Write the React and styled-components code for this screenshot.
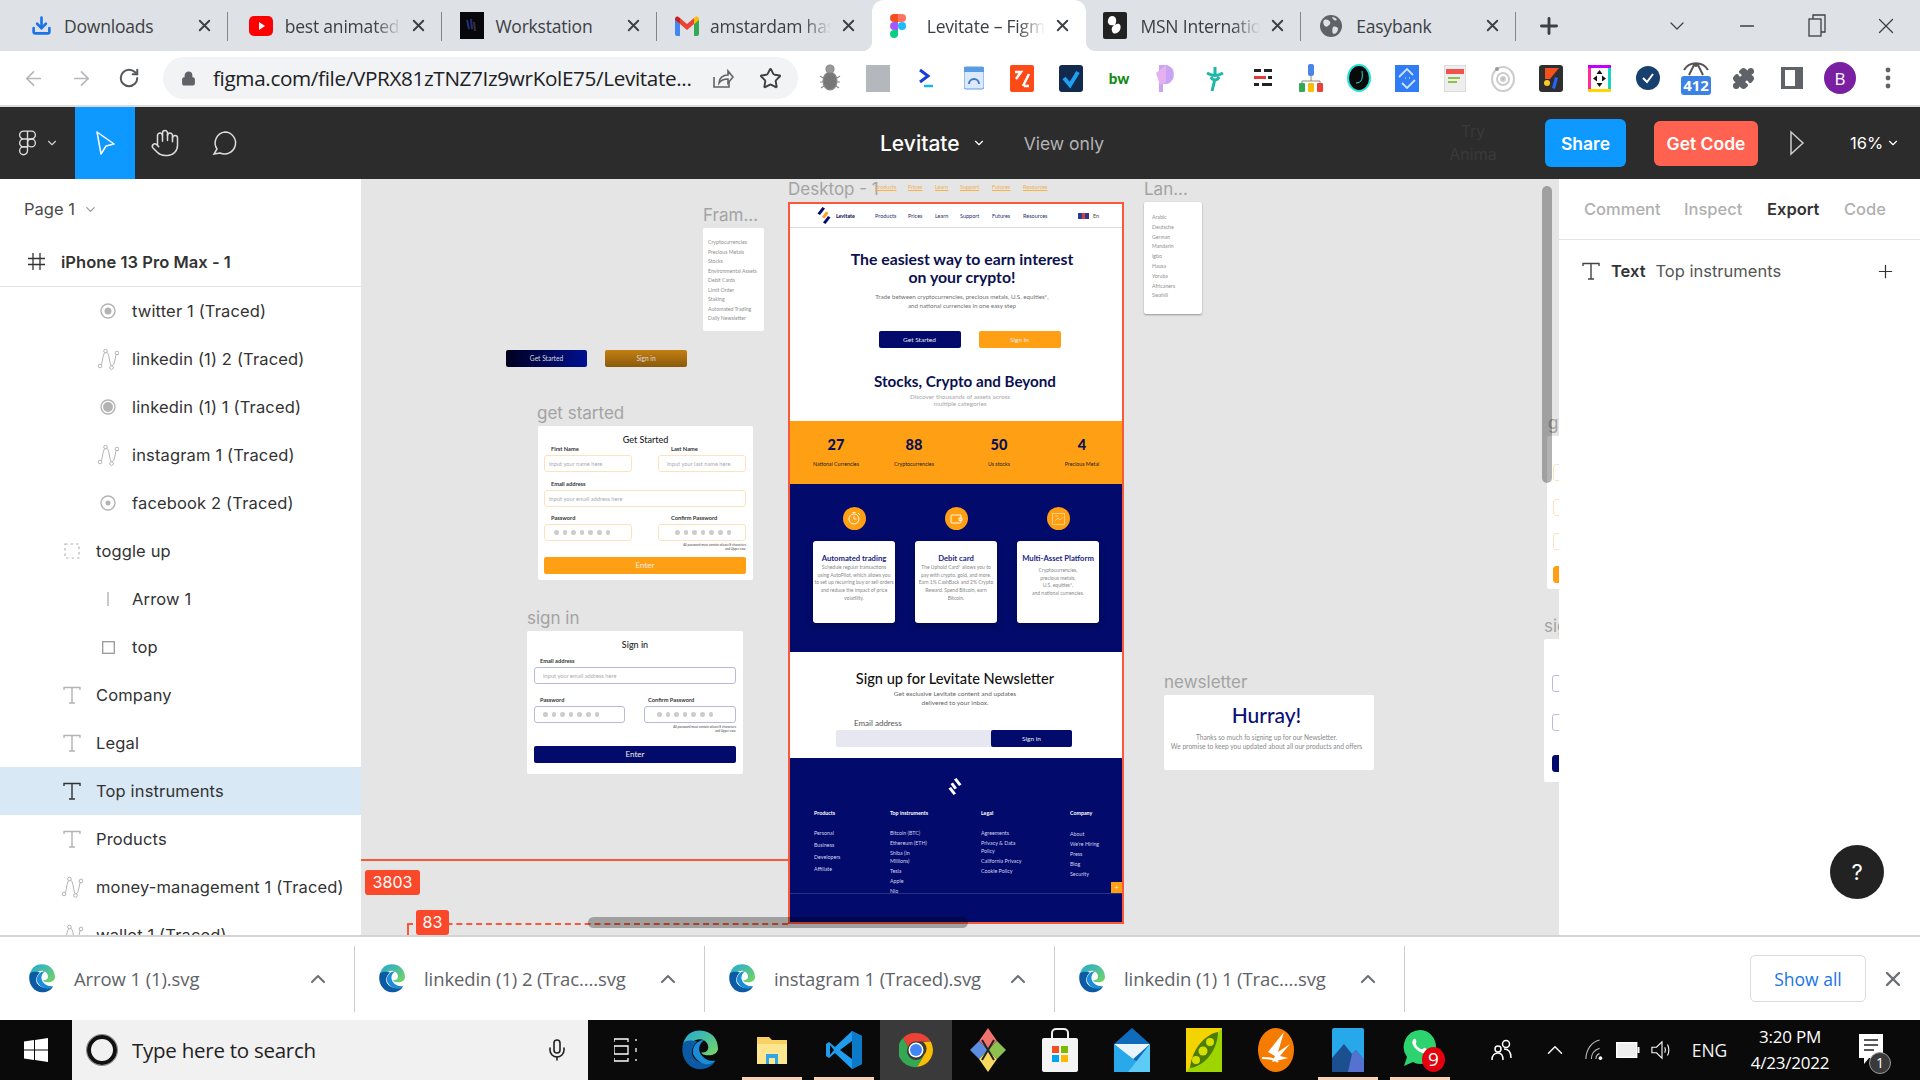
import React from 'react'
import styled, { createGlobalStyle } from 'styled-components'
import {
  ArrowLeft,
  ArrowRight,
  RotateCw,
  Lock,
  Star,
  Plus,
  ChevronDown,
  ChevronUp,
  X,
  Minus,
  Download,
  Puzzle,
  Mic,
  Hand,
} from 'lucide-react'

const NAVY = '#020b6b'
const ORANGE = '#ff9f14'
const UI = '"Open Sans", "Liberation Sans", sans-serif'
const FIGMA = 'Inter, "Liberation Sans", sans-serif'
const SITE = 'Lato, "Open Sans", sans-serif'

const GlobalStyle = createGlobalStyle`
  html, body { margin: 0; padding: 0; background: #fff; }
  * { box-sizing: border-box; }
`

const Page = styled.div`
  width: 1920px;
  height: 1080px;
  display: flex;
  flex-direction: column;
  overflow: hidden;
  font-family: ${UI};
`

/* browser chrome */

const TabStrip = styled.div`
  height: 51px;
  background: #dee1e6;
  display: flex;
  padding-left: 13px;
  flex-shrink: 0;
`

const TabBox = styled.div`
  position: relative;
  width: 214.7px;
  height: 51px;
  display: flex;
  align-items: center;
  padding: 0 14px 0 ${p => p.$pad}px;
  color: #3c4043;
  font-size: 17.5px;
  letter-spacing: -0.2px;
  background: ${p => (p.$active ? '#fff' : 'transparent')};
  border-radius: ${p => (p.$active ? '12px 12px 0 0' : '0')};

  &::before,
  &::after {
    content: '';
    display: ${p => (p.$active ? 'block' : 'none')};
    position: absolute;
    bottom: 0;
    width: 10px;
    height: 10px;
  }
  &::before {
    left: -10px;
    background: radial-gradient(circle at 0 0, #dee1e6 10px, #fff 10.5px);
  }
  &::after {
    right: -10px;
    background: radial-gradient(circle at 100% 0, #dee1e6 10px, #fff 10.5px);
  }
`

const TabSep = styled.span`
  position: absolute;
  right: 0;
  top: 12px;
  height: 29px;
  width: 1px;
  background: #80868b;
`

const TabIcon = styled.span`
  width: 24px;
  height: 24px;
  margin-right: ${p => p.$gap}px;
  display: flex;
  align-items: center;
  justify-content: center;
  flex-shrink: 0;
`

const TabLabel = styled.span`
  flex: 1;
  white-space: nowrap;
  overflow: hidden;
  -webkit-mask-image: ${p => (p.$fade ? 'linear-gradient(90deg, #000 72%, transparent 94%)' : 'none')};
`

const WindowControls = styled.div`
  display: flex;
  align-items: center;
  margin-left: auto;
  color: #3c4043;
`

const PlusButton = styled.div`
  margin-left: 20px;
  display: flex;
  align-items: center;
  color: #3c4043;
`

const WindowButton = styled.span`
  width: ${p => p.$w}px;
  display: flex;
  justify-content: center;
`

const Toolbar = styled.div`
  height: 54px;
  flex-shrink: 0;
  background: #fff;
  display: flex;
  align-items: center;
  padding-left: 9px;
`

const NavButton = styled.span`
  width: 48px;
  display: flex;
  justify-content: center;
  color: ${p => p.$color};
`

const Omnibox = styled.div`
  width: 635px;
  height: 42px;
  margin-left: 10px;
  margin-right: 8px;
  border-radius: 21px;
  background: #f1f3f4;
  display: flex;
  align-items: center;
  padding-left: 18px;
  color: #5f6368;
`

const UrlText = styled.span`
  margin-left: 17px;
  width: 485px;
  font-size: 20.7px;
  letter-spacing: -0.35px;
  color: #202124;
  white-space: nowrap;
`

const OmniAction = styled.span`
  width: 48px;
  display: flex;
  justify-content: center;
`

const ExtCell = styled.span`
  width: 48.1px;
  height: 54px;
  flex-shrink: 0;
  display: flex;
  align-items: center;
  justify-content: center;
`

const Avatar = styled.span`
  width: 32px;
  height: 32px;
  border-radius: 50%;
  background: #7b1fa2;
  color: #fff;
  font-size: 17px;
  display: flex;
  align-items: center;
  justify-content: center;
`

const ChromeRule = styled.div`
  height: 2px;
  background: #dcdcdc;
  flex-shrink: 0;
`

/* figma toolbar */

const FigmaBar = styled.div`
  height: 72px;
  flex-shrink: 0;
  background: #2c2c2c;
  display: flex;
  align-items: center;
  padding-right: 16px;
  color: #fff;
  font-family: ${FIGMA};
`

const FigmaMenu = styled.div`
  width: 75px;
  display: flex;
  align-items: center;
  padding-left: 18px;
  gap: 8px;
`

const ToolButton = styled.div`
  width: ${p => p.$w}px;
  height: 72px;
  display: flex;
  align-items: center;
  justify-content: center;
  background: ${p => (p.$active ? '#0d99ff' : 'transparent')};
`

const FileName = styled.div`
  margin-left: 625px;
  display: flex;
  align-items: center;
  gap: 12px;
  font-size: 21px;
  font-weight: 500;
`

const ViewOnly = styled.div`
  margin-left: 38px;
  color: #b3b3b3;
  font-size: 17.5px;
`

const TryAnima = styled.div`
  margin-left: auto;
  margin-right: 46px;
  width: 52px;
  text-align: center;
  color: #3a3a3a;
  font-size: 16px;
  line-height: 23px;
`

const ShareButton = styled.div`
  width: 81px;
  height: 48px;
  border-radius: 6px;
  background: #0d99ff;
  display: flex;
  align-items: center;
  justify-content: center;
  font-size: 17.5px;
  font-weight: 600;
`

const CodeButton = styled.div`
  width: 104px;
  height: 45px;
  margin-left: 28px;
  border-radius: 6px;
  background: #ff6250;
  display: flex;
  align-items: center;
  justify-content: center;
  font-size: 17.5px;
  font-weight: 600;
`

const PlayButton = styled.div`
  margin-left: 31px;
  width: 22px;
  display: flex;
`

const Zoom = styled.div`
  margin-left: 39px;
  display: flex;
  align-items: center;
  gap: 3px;
  font-size: 16.5px;
  width: 54px;
`

/* main area */

const Main = styled.div`
  height: 756px;
  flex-shrink: 0;
  display: flex;
  overflow: hidden;
`

const Sidebar = styled.aside`
  width: 361px;
  flex-shrink: 0;
  background: #fff;
  overflow: hidden;
  font-family: ${FIGMA};
  color: #333;
`

const PageRow = styled.div`
  height: 60px;
  display: flex;
  align-items: center;
  padding-left: 24px;
  gap: 8px;
  font-size: 16.5px;
  color: #4a4a4a;
`

const FrameRow = styled.div`
  height: 48px;
  display: flex;
  align-items: center;
  padding: 0 0 2px 28px;
  border-bottom: 1px solid #e5e5e5;
  font-size: 16.5px;
  font-weight: 600;
  letter-spacing: 0.05px;
  color: #333;
  gap: 16px;
`

const LayerRow = styled.div`
  height: 48px;
  display: flex;
  align-items: center;
  padding-left: ${p => (p.$deep ? 96 : 60)}px;
  background: ${p => (p.$selected ? '#d9e8f5' : 'transparent')};
  font-size: 16.5px;
  letter-spacing: 0.15px;
  white-space: nowrap;
`

const LayerIcon = styled.span`
  width: 24px;
  height: 24px;
  margin-right: 12px;
  display: flex;
  align-items: center;
  justify-content: center;
  color: ${p => (p.$selected ? '#333' : '#b3b3b3')};
`

const Canvas = styled.div`
  position: relative;
  flex: 1;
  background: #e5e5e5;
  overflow: hidden;
  font-family: ${SITE};
`

const CanvasItem = styled.div`
  position: absolute;
  left: ${p => p.$x - 361}px;
  top: ${p => p.$y - 179}px;
  width: ${p => p.$w}px;
`

const FrameLabel = styled.div`
  position: absolute;
  left: ${p => p.$x - 361}px;
  top: ${p => p.$y - 179 - 12}px;
  line-height: 24px;
  font-family: ${FIGMA};
  font-size: 17px;
  color: #a3a3a3;
  white-space: nowrap;
`

const WhiteCard = styled(CanvasItem)`
  background: #fff;
  height: ${p => p.$h}px;
  border-radius: 2px;
  overflow: hidden;
  box-shadow: ${p => (p.$shadow ? '0 1px 2px rgba(0,0,0,.35)' : 'none')};
`

const GradientButton = styled(CanvasItem)`
  height: 17px;
  border-radius: 2px;
  color: #dcdcdc;
  font-size: 6.6px;
  line-height: 17px;
  text-align: center;
  background: ${p => p.$bg};
`

const MenuList = styled.div`
  padding: ${p => p.$top}px 0 0 ${p => p.$left}px;
  color: #8f8f8f;
  font-size: ${p => p.$size}px;
  line-height: ${p => p.$pitch}px;
  white-space: nowrap;
`

/* desktop frame */

const DesktopFrame = styled(CanvasItem)`
  height: 722px;
  border: 2px solid #f9593a;
  background: #fff;
`

const SiteNav = styled.div`
  height: 24px;
  display: flex;
  align-items: center;
  padding-left: 27px;
  border-bottom: 1px solid #ddd;
`

const Brand = styled.div`
  width: 58px;
  display: flex;
  align-items: center;
  gap: 5px;
  color: #0e1460;
  font-size: 5.2px;
  font-weight: 900;
`

const LinkGrid = styled.div`
  display: grid;
  grid-template-columns: 33px 27px 25px 32px 31px 55px;
  font-size: 5.5px;
  color: ${p => (p.$ghost ? '#f3b04e' : '#2a2f6f')};
  text-decoration: ${p => (p.$ghost ? 'underline' : 'none')};
  white-space: nowrap;
`

const Lang = styled.div`
  display: flex;
  align-items: center;
  gap: 4px;
  color: #444;
  font-size: 5.5px;
`

const Flag = styled.span`
  width: 11px;
  height: 6px;
  background: linear-gradient(90deg, #2d3a8c 40%, #d04050 40%, #d04050 60%, #2d3a8c 60%);
`

const Hero = styled.section`
  height: 193px;
  padding: 22px 0 0 12px;
  display: flex;
  flex-direction: column;
  align-items: center;
  text-align: center;
`

const HeroTitle = styled.h1`
  margin: 0;
  font-size: 15.8px;
  line-height: 18px;
  font-weight: 700;
  color: #0b1050;
  white-space: nowrap;
`

const HeroSub = styled.p`
  margin: 6px 0 0;
  font-size: 6.2px;
  line-height: 9px;
  color: #707070;
  white-space: nowrap;
`

const HeroActions = styled.div`
  display: flex;
  gap: 18px;
  margin: 21px 0 0 15px;
`

const SolidButton = styled.div`
  width: ${p => p.$w || 82}px;
  height: 17px;
  border-radius: 2px;
  background: ${p => p.$bg};
  color: ${p => p.$fg || '#e8e8f4'};
  font-size: 6.5px;
  line-height: 17px;
  text-align: center;
`

const StocksTitle = styled.h2`
  margin: 24px 0 0 6px;
  font-size: 15.2px;
  line-height: 18px;
  font-weight: 700;
  color: #0b1050;
  white-space: nowrap;
`

const StocksSub = styled.p`
  margin: 3px 0 0 -4px;
  font-size: 6.4px;
  line-height: 7px;
  color: #a8a8a8;
  white-space: nowrap;
`

const StatBand = styled.section`
  height: 63px;
  background: ${ORANGE};
  padding-top: 15px;
  display: grid;
  grid-template-columns: 92px 64px 106px 60px;
  text-align: center;
`

const StatValue = styled.div`
  font-size: 14.5px;
  line-height: 18px;
  font-weight: 900;
  color: #0a0f52;
`

const StatLabel = styled.div`
  margin-top: 6px;
  font-size: 5.3px;
  line-height: 8px;
  color: #222;
  white-space: nowrap;
`

const Features = styled.section`
  height: 168px;
  background: ${NAVY};
  padding: 23px 0 0 23px;
  display: grid;
  grid-template-columns: repeat(3, 82px);
  column-gap: 20px;
  align-items: start;
`

const Feature = styled.div`
  display: flex;
  flex-direction: column;
  align-items: center;
`

const FeatureBadge = styled.div`
  width: 23px;
  height: 23px;
  border-radius: 50%;
  background: ${ORANGE};
  display: flex;
  align-items: center;
  justify-content: center;
`

const FeatureCard = styled.div`
  width: 82px;
  height: 82px;
  margin-top: 11px;
  border-radius: 3px;
  background: #fff;
  padding-top: 12px;
  text-align: center;
  box-shadow: 0 3px 6px rgba(0, 0, 0, 0.25);
`

const FeatureTitle = styled.div`
  font-size: 7.7px;
  line-height: 10px;
  font-weight: 700;
  color: #1c2486;
  white-space: nowrap;
`

const FeatureText = styled.div`
  margin-top: ${p => (p.$inset ? 4 : 1)}px;
  font-size: 5px;
  line-height: 7.7px;
  color: #888;
  white-space: nowrap;
`

const Newsletter = styled.section`
  height: 106px;
  padding-top: 18px;
  display: flex;
  flex-direction: column;
`

const NewsTitle = styled.h2`
  margin: 0;
  text-align: center;
  font-size: 14.6px;
  line-height: 18px;
  font-weight: 500;
  color: #111;
  padding-right: 2px;
`

const NewsSub = styled.p`
  margin: 0.5px 0 0;
  text-align: center;
  font-size: 6.5px;
  line-height: 9px;
  color: #666;
  padding-right: 2px;
`

const NewsLabel = styled.div`
  margin: 12px 0 0 64px;
  font-size: 8px;
  line-height: 8px;
  color: #555;
`

const NewsField = styled.div`
  margin: 3px 0 0 46px;
  width: 236px;
  height: 17px;
  border-radius: 2px;
  background: #e6e7f1;
  display: flex;
  justify-content: flex-end;
`

const SiteFooter = styled.footer`
  position: relative;
  height: 164px;
  background: ${NAVY};
  padding-top: 20px;
`

const FooterLogo = styled.div`
  display: flex;
  justify-content: center;
  padding-right: 2px;
  svg { transform: scaleX(-1); }
`

const FooterGrid = styled.div`
  display: grid;
  grid-template-columns: 76px 91px 89px 60px;
  margin-top: 14px;
  padding-left: 24px;
  color: #cfd2ee;
  font-size: 5.3px;
`

const FooterHead = styled.div`
  line-height: 8px;
  color: #fff;
  font-weight: 700;
  margin-bottom: ${p => p.$gap}px;
`

const FooterLink = styled.div`
  line-height: 8px;
  margin-bottom: ${p => p.$gap}px;
  white-space: pre-line;
`

const FooterRule = styled.div`
  position: absolute;
  left: 0;
  right: 0;
  top: 135px;
  height: 1px;
  background: rgba(255, 255, 255, 0.16);
`

const ToggleUp = styled.div`
  position: absolute;
  right: 0;
  top: 124px;
  width: 11px;
  height: 11px;
  background: ${ORANGE};
  color: #ffe9c8;
  font-size: 8px;
  line-height: 11px;
  text-align: center;
`

/* auth cards */

const AuthTitle = styled.div`
  padding-top: 8px;
  text-align: center;
  font-size: 9px;
  line-height: 12px;
  font-weight: 500;
  color: #222;
`

const AuthBody = styled.div`
  padding: 0 7px 0 ${p => p.$left}px;
`

const PairRow = styled.div`
  display: grid;
  grid-template-columns: ${p => p.$cols};
  justify-content: space-between;
  margin-top: ${p => p.$top || 0}px;
`

const FieldLabel = styled.div`
  font-size: 5.7px;
  line-height: 8px;
  color: #333;
  font-weight: 700;
  padding-left: ${p => p.$left || 7}px;
  margin-top: ${p => p.$top || 0}px;
  white-space: nowrap;
`

const InputBox = styled.div`
  height: 17px;
  margin-top: ${p => p.$top || 0}px;
  border: 1px solid ${p => p.$border};
  border-radius: 3px;
  display: flex;
  align-items: center;
  gap: 4px;
  padding-left: ${p => p.$pad}px;
  color: #aaa;
  font-size: 5.7px;
  white-space: nowrap;
`

const Dot = styled.span`
  width: 4.6px;
  height: 4.6px;
  border-radius: 50%;
  background: #ccc;
`

const FieldNote = styled.div`
  margin-top: 2px;
  text-align: right;
  font-size: 3.1px;
  line-height: 4px;
  color: #444;
  white-space: pre-line;
`

const EnterButton = styled.div`
  height: 17px;
  margin-top: ${p => p.$top}px;
  border-radius: 2px;
  background: ${p => p.$bg};
  color: #f4f0e6;
  font-size: 8px;
  line-height: 17px;
  text-align: center;
`

const ClippedStack = styled.div`
  padding: ${p => p.$top}px 0 0 ${p => p.$left}px;
`

const ClippedInput = styled.div`
  width: 20px;
  height: 17px;
  margin-bottom: ${p => p.$gap}px;
  border: 1px solid ${p => p.$border};
  border-radius: 3px;
  background: ${p => p.$fill || 'transparent'};
`

/* newsletter card */

const HurrayTitle = styled.div`
  padding-top: 8px;
  text-align: center;
  font-size: 21px;
  line-height: 24px;
  color: #0a1173;
  font-weight: 500;
  padding-right: 5px;
`

const HurrayText = styled.div`
  margin-top: 6px;
  text-align: center;
  font-size: 6.6px;
  line-height: 8.5px;
  color: #8a8a8a;
  white-space: pre-line;
  padding-right: 5px;
`

/* measurement overlay */

const RedLine = styled.div`
  position: absolute;
  left: ${p => p.$x - 361}px;
  top: ${p => p.$y - 179}px;
  width: ${p => p.$w}px;
  border-top: 2px ${p => (p.$dashed ? 'dashed' : 'solid')} #f9593a;
`

const RedTick = styled.div`
  position: absolute;
  left: 46px;
  top: 744px;
  width: 2px;
  height: 12px;
  background: #f9593a;
`

const RedBadge = styled.div`
  position: absolute;
  left: ${p => p.$x - 361}px;
  top: ${p => p.$y - 179}px;
  width: ${p => p.$w}px;
  height: 25px;
  border-radius: 3px;
  background: #f9482a;
  color: #fff;
  font-family: ${FIGMA};
  font-size: 16px;
  line-height: 25px;
  text-align: center;
`

const ScrollThumb = styled.div`
  position: absolute;
  background: rgba(0, 0, 0, 0.3);
  border-radius: 6px;
  ${p => (p.$vertical
    ? 'left: 1181px; top: 7px; width: 10px; height: 297px;'
    : 'left: 227px; top: 738px; width: 380px; height: 11px;')}
`

/* right panel */

const Inspector = styled.aside`
  width: 361px;
  flex-shrink: 0;
  background: #fff;
  position: relative;
  font-family: ${FIGMA};
`

const InspectorTabs = styled.div`
  height: 61px;
  display: flex;
  align-items: center;
  border-bottom: 1px solid #e5e5e5;
  padding-left: 25px;
`

const InspectorTab = styled.div`
  width: ${p => p.$w}px;
  font-size: 16.5px;
  font-weight: ${p => (p.$active ? 600 : 500)};
  color: ${p => (p.$active ? '#333' : '#b0b0b0')};
`

const ExportRow = styled.div`
  height: 62px;
  display: flex;
  align-items: center;
  padding: 0 24px 0 23px;
  font-size: 16.5px;
  color: #555;
`

const ExportKind = styled.span`
  font-weight: 600;
  color: #333;
  margin: 0 10px 0 11px;
`

const ExportAdd = styled.span`
  margin-left: auto;
  display: flex;
  color: #333;
`

const HelpButton = styled.div`
  position: absolute;
  left: 271px;
  top: 666px;
  width: 54px;
  height: 54px;
  border-radius: 50%;
  background: #222;
  color: #fff;
  font-size: 22px;
  line-height: 54px;
  text-align: center;
`

/* downloads shelf */

const Shelf = styled.div`
  height: 85px;
  flex-shrink: 0;
  border-top: 2px solid #d4d4d4;
  background: #fff;
  display: flex;
  align-items: center;
  padding-left: 5px;
`

const ShelfItem = styled.div`
  width: 350px;
  height: 66px;
  border-right: 1px solid #ccc;
  display: flex;
  align-items: center;
  padding-left: 24px;
  color: #5f6368;
  font-size: 18.5px;
  letter-spacing: -0.1px;
`

const ShelfName = styled.span`
  width: 232px;
  margin-left: 19px;
  white-space: nowrap;
`

const ShowAll = styled.div`
  width: 116px;
  height: 47px;
  margin-left: auto;
  border: 1px solid #dadce0;
  border-radius: 5px;
  color: #1a73e8;
  font-size: 17.5px;
  font-weight: 500;
  display: flex;
  align-items: center;
  justify-content: center;
`

const ShelfClose = styled.span`
  width: 54px;
  display: flex;
  justify-content: center;
  color: #6b6f73;
`

/* taskbar */

const Taskbar = styled.div`
  height: 60px;
  flex-shrink: 0;
  background: #0a0a0a;
  display: flex;
  align-items: center;
  color: #fff;
`

const StartButton = styled.div`
  width: 72px;
  display: flex;
  justify-content: center;
`

const SearchBox = styled.div`
  width: 516px;
  height: 60px;
  background: #f1f1f1;
  display: flex;
  align-items: center;
  padding-left: 15px;
  color: #222;
  font-size: 20.5px;
  letter-spacing: -0.25px;
`

const Cortana = styled.span`
  width: 30px;
  height: 30px;
  border-radius: 50%;
  border: 4px solid #111;
  box-shadow: 0 0 0 1px #888;
  margin-right: 15px;
  flex-shrink: 0;
`

const SearchMic = styled.span`
  margin-left: auto;
  margin-right: 19px;
  display: flex;
  color: #222;
`

const TaskButton = styled.div`
  position: relative;
  width: ${p => p.$w || 72}px;
  height: 60px;
  display: flex;
  align-items: center;
  justify-content: center;
  background: ${p => (p.$active ? '#3a3a3a' : 'transparent')};
  &::after {
    content: '';
    display: ${p => (p.$running ? 'block' : 'none')};
    position: absolute;
    left: 6px;
    right: 6px;
    bottom: 0;
    height: 3px;
    background: #f9d2b4;
  }
`

const TrayIcon = styled.span`
  width: ${p => p.$w}px;
  margin-left: ${p => p.$left || 0}px;
  display: flex;
  justify-content: center;
  font-size: 17.5px;
  color: #f2f2f2;
`

const Clock = styled.div`
  width: 112px;
  text-align: center;
  font-size: 17px;
  line-height: 26px;
  letter-spacing: -0.2px;
`

const NotifyBadge = styled.span`
  position: absolute;
  right: 5px;
  top: 32px;
  width: 22px;
  height: 22px;
  border-radius: 50%;
  background: #3a3a3a;
  border: 1px solid #999;
  font-size: 14px;
  line-height: 20px;
  text-align: center;
`

const UnreadBadge = styled.span`
  position: absolute;
  left: 38px;
  top: 27px;
  width: 23px;
  height: 25px;
  border-radius: 50%;
  background: #e4000f;
  color: #fff;
  font-size: 19px;
  line-height: 25px;
  text-align: center;
`

/* drawings */

const FigmaGlyph = ({ size = 24 }) => (
  <svg width={size * 0.67} height={size} viewBox="0 0 16 24">
    <path fill="#f24e1e" d="M8 0H4a4 4 0 0 0 0 8h4z" />
    <path fill="#ff7262" d="M8 0h4a4 4 0 0 1 0 8H8z" />
    <path fill="#a259ff" d="M8 8H4a4 4 0 0 0 0 8h4z" />
    <circle fill="#1abcfe" cx="12" cy="12" r="4" />
    <path fill="#0acf83" d="M8 16H4a4 4 0 1 0 4 4z" />
  </svg>
)

const FigmaOutline = () => (
  <svg width="19" height="27" viewBox="0 0 16 24" fill="none" stroke="#ddd" strokeWidth="1.2">
    <path d="M8 1H4.5a3.5 3.5 0 0 0 0 7H8zM8 1h3.5a3.5 3.5 0 0 1 0 7H8zM8 8H4.5a3.5 3.5 0 0 0 0 7H8z" />
    <circle cx="11.5" cy="11.5" r="3.5" />
    <path d="M8 15H4.5A3.5 3.5 0 1 0 8 18.500z" />
  </svg>
)

const YouTubeGlyph = () => (
  <svg width="24" height="24" viewBox="0 0 24 24">
    <rect x="0" y="2" width="24" height="20" rx="5" fill="#f00" />
    <path d="M10 8l6 4-6 4z" fill="#fff" />
  </svg>
)

const GmailGlyph = () => (
  <svg width="24" height="20" viewBox="0 0 24 20">
    <path d="M0 3v15a2 2 0 0 0 2 2h3V8z" fill="#4285f4" />
    <path d="M24 3v15a2 2 0 0 1-2 2h-3V8z" fill="#34a853" />
    <path d="M5 8v-6L12 8l7-6v6l-7 6z" fill="#ea4335" />
    <path d="M0 3c0-3 3-3.500 5-1v6L0 4z" fill="#c5221f" />
    <path d="M24 3c0-3-3-3.500-5-1v6l5-4z" fill="#fbbc04" />
  </svg>
)

const DarkTile = () => (
  <svg width="24" height="27" viewBox="0 0 24 27">
    <rect width="24" height="27" fill="#08080c" />
    <path d="M7 8l2 9M11 7l1 10" stroke="#20307a" strokeWidth="2" />
    <path d="M14 10l1 9" stroke="#333" strokeWidth="2" />
  </svg>
)

const MsnTile = () => (
  <svg width="24" height="27" viewBox="0 0 24 27">
    <rect width="24" height="27" rx="2" fill="#222" />
    <path d="M9 4c5 0 5 6 3 9 4-3 7 0 5 5-2 4-7 5-8 1-1-3 1-5 2-6-4 1-7-1-6-5 1-3 2-4 4-4z" fill="#fff" />
  </svg>
)

const GlobeGlyph = () => (
  <svg width="22" height="22" viewBox="0 0 22 22">
    <circle cx="11" cy="11" r="11" fill="#5f6368" />
    <path d="M4 5c3-1 5 0 6 2s-1 3-2 4-3 1-4-1-1-3 0-5zM13 12c2-1 5 0 5 2s-2 5-4 5-2-5-1-7zM12 2c2 0 4 1 5 3-2 1-4 0-5-3z" fill="#dee1e6" />
  </svg>
)

const ShareOut = () => (
  <svg width="24" height="24" viewBox="0 0 24 24" fill="none" stroke="#5f6368" strokeWidth="1.6">
    <path d="M4 11v10h15v-5" />
    <path d="M9 17c0-5 4-8 9-8V5l5 6-5 6v-4c-4 0-7 1-9 4z" />
  </svg>
)

const bugIcon = (
  <svg width="24" height="28" viewBox="0 0 24 28" fill="none" stroke="#8a8a8a" strokeWidth="1.2">
    <ellipse cx="12" cy="17" rx="7" ry="9" fill="#777" />
    <circle cx="12" cy="5" r="4" fill="#999" />
    <path d="M2 12l3 2M2 18h3M3 24l3-2M22 12l-3 2M22 18h-3M21 24l-3-2" />
  </svg>
)

const extensions = [
  bugIcon,
  <svg width="24" height="27" key="s"><rect width="24" height="27" fill="#b4b8bd" /></svg>,
  <svg width="16" height="20" viewBox="0 0 16 20" key="t"><path d="M2 2l8 6-8 6" fill="none" stroke="#1a3fd8" strokeWidth="3" /><path d="M6 18h9" stroke="#19b5f1" strokeWidth="2.500" /></svg>,
  <svg width="20" height="24" viewBox="0 0 20 24" key="c"><rect y="1" width="20" height="22" rx="2" fill="#dbe9fa" stroke="#5a9be6" /><rect y="1" width="20" height="5" fill="#5a9be6" /><path d="M5 18a5 5 0 0 1 10 0" stroke="#3f7bc8" strokeWidth="2" fill="none" /></svg>,
  <svg width="24" height="27" viewBox="0 0 24 27" key="o"><rect width="24" height="27" rx="2" fill="#fe4a17" /><path d="M5 7h6L6 14M13 21l6-12M14 21h5" stroke="#fff" strokeWidth="2.500" fill="none" /></svg>,
  <svg width="24" height="27" viewBox="0 0 24 27" key="v"><rect width="24" height="27" rx="3" fill="#132a4f" /><path d="M5 13l6 7 8-13" stroke="#1da1f2" strokeWidth="4" fill="none" /></svg>,
  <svg width="26" height="20" viewBox="0 0 26 20" key="b"><text x="13" y="16" textAnchor="middle" fontFamily="Lato" fontWeight="900" fontSize="15" fill="#148a14">bw</text></svg>,
  <svg width="21" height="27" viewBox="0 0 21 27" key="p"><path d="M3 0h8a10 10 0 0 1 0 19H7v8H3z" fill="#c9a4f4" /><path d="M0 8l10-8v17L4 20z" fill="#e4b0f0" /></svg>,
  <svg width="20" height="27" viewBox="0 0 20 27" fill="none" stroke="#1db8ab" strokeWidth="3" key="f"><path d="M2 8c5 3 11 3 16 0M10 2v8M6 12c2 4 6 4 8 0M10 14l-3 12" /></svg>,
  <svg width="18" height="18" viewBox="0 0 18 18" key="l"><rect width="7" height="3" fill="#222" /><rect x="10" width="8" height="3" fill="#222" /><rect y="7" width="12" height="3" fill="#e53935" /><rect x="14" y="7" width="4" height="3" fill="#222" /><rect y="14" width="5" height="3" fill="#222" /><rect x="8" y="14" width="10" height="3" fill="#222" /></svg>,
  <svg width="24" height="28" viewBox="0 0 24 28" key="m"><rect x="9" width="6" height="12" rx="2" fill="#4a86e8" /><path d="M12 12v5M3 20v-3h18v3" stroke="#888" fill="none" /><rect y="19" width="6" height="9" rx="1" fill="#34a853" /><rect x="9" y="19" width="6" height="9" rx="1" fill="#fbbc04" /><rect x="18" y="19" width="6" height="9" rx="1" fill="#ea4335" /></svg>,
  <svg width="24" height="28" viewBox="0 0 24 28" key="r"><ellipse cx="12" cy="14" rx="11" ry="13" fill="#0a0a0a" stroke="#26e0d6" strokeWidth="2" /><path d="M15 7c1 7 0 12-6 12" stroke="#26e0d6" fill="none" /></svg>,
  <svg width="24" height="27" viewBox="0 0 24 27" key="d"><rect width="24" height="27" fill="#2f7cf6" /><path d="M4 12l8-8 6 6M20 15l-8 8-5-5" stroke="#cfe2ff" strokeWidth="1.800" fill="none" /><path d="M10 13h1M14 13h1" stroke="#fff" /></svg>,
  <svg width="22" height="27" viewBox="0 0 22 27" key="n"><rect width="22" height="27" rx="2" fill="#eee" stroke="#ccc" /><rect x="2" y="4" width="18" height="5" fill="#ef5350" /><path d="M4 13h12M4 17h9" stroke="#8bc34a" strokeWidth="2" /></svg>,
  <svg width="24" height="27" viewBox="0 0 24 27" fill="none" stroke="#ccc" strokeWidth="2" key="g"><ellipse cx="12" cy="14" rx="11" ry="12" /><circle cx="12" cy="14" r="6" /><circle cx="12" cy="14" r="2" fill="#bbb" /><circle cx="6" cy="4" r="2" fill="#999" stroke="none" /></svg>,
  <svg width="24" height="27" viewBox="0 0 24 27" key="k"><rect width="24" height="27" rx="3" fill="#2e2e2e" /><path d="M6 3h14l-9 11H6z" fill="#f4511e" /><circle cx="8" cy="18" r="3" fill="#ffca28" /><path d="M16 12l3 1-3 11-3-1z" fill="#2962ff" /></svg>,
  <svg width="23" height="27" viewBox="0 0 23 27" key="x"><rect width="23" height="3" fill="#c300ff" /><rect y="24" width="23" height="3" fill="#ffd400" /><rect y="3" width="3" height="21" fill="#ff2d95" /><rect x="20" y="3" width="3" height="21" fill="#18d6c5" /><path d="M11.500 5l3 4h-6zM11.500 22l3-4h-6zM5 13.500l4-3v6zM18 13.500l-4-3v6z" fill="#111" /></svg>,
  <svg width="24" height="24" viewBox="0 0 24 24" key="u"><circle cx="12" cy="12" r="12" fill="#18406e" /><path d="M7 12l4 4 6-8" stroke="#fff" strokeWidth="2" fill="none" /></svg>,
]

const CounterExtension = () => (
  <svg width="30" height="34" viewBox="0 0 30 34">
    <path d="M8 14l5-10h4l5 10M3 9a14 14 0 0 1 24 0" fill="none" stroke="#555" strokeWidth="2" />
    <circle cx="15" cy="4" r="2" fill="#555" />
    <rect y="15" width="30" height="19" rx="3" fill="#3b82e6" />
    <text x="15" y="30" fontFamily="Open Sans" fontSize="15" fontWeight="700" fill="#fff" textAnchor="middle">412</text>
  </svg>
)

const SidePanelIcon = () => (
  <svg width="22" height="22" viewBox="0 0 22 22">
    <path d="M0 0h22v22H0z" fill="#5f6368" />
    <path d="M4 3h10v16H4z" fill="#fff" />
  </svg>
)

const DotsMenu = () => (
  <svg width="6" height="24" viewBox="0 0 6 24" fill="#5f6368">
    <circle cx="3" cy="4" r="2.400" />
    <circle cx="3" cy="12" r="2.400" />
    <circle cx="3" cy="20" r="2.400" />
  </svg>
)

const CursorIcon = () => (
  <svg width="22" height="26" viewBox="0 0 22 26" fill="none" stroke="#fff" strokeWidth="1.500" strokeLinejoin="round">
    <path d="M3 2l17 12-8 2-5 8z" />
  </svg>
)

const BubbleIcon = () => (
  <svg width="28" height="28" viewBox="0 0 28 28" fill="none" stroke="#ddd" strokeWidth="1.500">
    <path d="M14 3a11 11 0 1 1-5 21l-6 1 3-5A11 11 0 0 1 14 3z" />
  </svg>
)

const PlayIcon = () => (
  <svg width="16" height="26" viewBox="0 0 16 26" fill="none" stroke="#ccc" strokeWidth="1.500">
    <path d="M2 2l12 11L2 24z" />
  </svg>
)

const GridIcon = () => (
  <svg width="17" height="17" viewBox="0 0 17 17" stroke="#333" strokeWidth="1.300">
    <path d="M0 5.500h17M0 11.500h17M5 0v17M12 0v17" />
  </svg>
)

const TextGlyph = ({ color = '#b3b3b3' }) => (
  <svg width="18" height="18" viewBox="0 0 18 18" fill="none" stroke={color} strokeWidth="1.400">
    <path d="M1 4V1.500h16V4M9 1.500V17M6 17h6" />
  </svg>
)

const VectorGlyph = () => (
  <svg width="22" height="22" viewBox="0 0 22 22" fill="none" stroke="#b3b3b3" strokeWidth="1">
    <path d="M3 18C6 18 5 4 9 4s3 14 6 14 3-11 5-13" />
    <circle cx="3" cy="18" r="1.800" fill="#fff" />
    <circle cx="8.500" cy="3" r="1.800" fill="#fff" />
    <circle cx="14.500" cy="19.500" r="1.800" fill="#fff" />
    <circle cx="20" cy="5" r="1.800" fill="#fff" />
  </svg>
)

const MaskGlyph = ({ mark }) => (
  <svg width="16" height="16" viewBox="0 0 16 16">
    <circle cx="8" cy="8" r="7" fill="none" stroke="#b3b3b3" strokeWidth="1.400" />
    <circle cx="8" cy="8" r={mark} fill="#b3b3b3" />
  </svg>
)

const GroupGlyph = () => (
  <svg width="16" height="16" viewBox="0 0 16 16" fill="none" stroke="#b3b3b3" strokeWidth="1.200" strokeDasharray="2.500 3">
    <rect x="1" y="1" width="14" height="14" />
  </svg>
)

const LineGlyph = () => (
  <svg width="4" height="14" viewBox="0 0 4 14"><path d="M2 0v14" stroke="#b3b3b3" strokeWidth="1.400" /></svg>
)

const RectGlyph = () => (
  <svg width="13" height="13" viewBox="0 0 13 13"><rect x=".7" y=".7" width="11.600" height="11.600" fill="none" stroke="#999" strokeWidth="1.300" /></svg>
)

const LogoMark = ({ top, middle }) => (
  <svg width="14" height="17" viewBox="0 0 14 17">
    <path d="M5.500 0L8 1.500 3 8 .5 6.500z" fill={top} />
    <path d="M9 4.500l2.500 1.500-4 5.500L5 10z" fill={middle} />
    <path d="M11 9l2.500 1.500L8.500 17 6 15.500z" fill={top} />
  </svg>
)

const ClockBadge = () => (
  <svg width="13" height="13" viewBox="0 0 13 13" fill="none" stroke="#fff" strokeWidth=".9">
    <circle cx="6" cy="7" r="5" /><path d="M6 4v3h2.500M10 1l2 2M4.500 .6h3" />
  </svg>
)

const WalletBadge = () => (
  <svg width="13" height="11" viewBox="0 0 13 11" fill="none" stroke="#fff" strokeWidth=".9">
    <path d="M2 2h9v7a1 1 0 0 1-1 1H1V3a1 1 0 0 1 1-1zM9 5h3v2.500H9z" />
  </svg>
)

const ChartBadge = () => (
  <svg width="13" height="12" viewBox="0 0 13 12" fill="none" stroke="#ffe0b0" strokeWidth=".7">
    <rect x=".5" y=".5" width="12" height="11" /><path d="M3 8l3-3 2 2 3-3M3 3h3" />
  </svg>
)

const EdgeGlyph = ({ size = 26 }) => (
  <svg width={size} height={size * 1.100} viewBox="0 0 26 28">
    <defs>
      <linearGradient id="edgeTop" x1="0" y1="0" x2="1" y2="1">
        <stop offset="0" stopColor="#1fa8dc" />
        <stop offset="1" stopColor="#7ed957" />
      </linearGradient>
    </defs>
    <path d="M13 0c8 0 13 6 13 13 0 3-3 5-7 5-3 0-5-1-5-2 3 0 5-1 5-4 0-4-5-7-9-5C5 9 3 14 5 20 1 17 0 12 1 9 3 3 7 0 13 0z" fill="url(#edgeTop)" />
    <path d="M1 9c-3 9 3 19 12 19 5 0 9-2 11-6-5 3-13 2-16-3C6 15 8 11 11 8 6 7 3 7 1 9z" fill="#0c59a4" />
    <path d="M8 17c-1-5 3-10 8-10-4 3-5 8-1 12 3 3 7 3 9 3-4 5-13 2-16-5z" fill="#1a8cd8" />
  </svg>
)

const ExplorerGlyph = () => (
  <svg width="32" height="32" viewBox="0 0 32 32">
    <path d="M1 3h12l3 3h15v24H1z" fill="#f9d162" />
    <path d="M1 10h30v20H1z" fill="#fde68f" />
    <path d="M10 20h12v10h-3v-6h-6v6h-3z" fill="#2fa6e8" />
  </svg>
)

const VsCodeGlyph = () => (
  <svg width="36" height="38" viewBox="0 0 36 38">
    <path d="M26 0l10 5v28l-10 5L9 22l-6 5-3-2v-12l3-2 6 5z" fill="#1f9cf0" />
    <path d="M26 0l10 5v28l-10 5z" fill="#0b7bc9" />
    <path d="M26 10L14 19l12 9z" fill="#0a0a0a" />
    <path d="M4 14l4 5-4 5z" fill="#0a0a0a" />
  </svg>
)

const ChromeGlyph = () => (
  <svg width="34" height="40" viewBox="0 0 34 34">
    <path d="M17 0a17 17 0 0 1 14.700 8.500H17a8.500 8.500 0 0 0-8 5.500L4 5a17 17 0 0 1 13-5z" fill="#ea4335" />
    <path d="M31.700 8.500A17 17 0 0 1 18 34l7-12a8.500 8.500 0 0 0-1-13z" fill="#fbbc04" />
    <path d="M4 5a17 17 0 0 0 14 29l7-12a8.500 8.500 0 0 1-16-8z" fill="#34a853" />
    <circle cx="17" cy="17" r="7.500" fill="#fff" />
    <circle cx="17" cy="17" r="6" fill="#4285f4" />
  </svg>
)

const KrakenGlyph = () => (
  <svg width="36" height="44" viewBox="0 0 36 44">
    <path d="M18 0l9 13-9 9-9-9z" fill="#f0736d" />
    <path d="M9 13l9 9-9 9-9-9z" fill="#5b8de0" />
    <path d="M27 13l9 9-9 9-9-9z" fill="#8cc152" />
    <path d="M18 22l9 9-9 13-9-13z" fill="#f6d860" />
    <path d="M12 12l12 20M24 12L12 32" stroke="#222" strokeWidth="2" />
  </svg>
)

const StoreGlyph = () => (
  <svg width="36" height="44" viewBox="0 0 36 44">
    <path d="M10 10V5a4 4 0 0 1 4-4h8a4 4 0 0 1 4 4v5" fill="none" stroke="#eee" strokeWidth="2" />
    <rect y="10" width="36" height="34" rx="2" fill="#f4f4f4" />
    <rect x="10" y="18" width="7" height="7" fill="#f25022" />
    <rect x="19" y="18" width="7" height="7" fill="#7fba00" />
    <rect x="10" y="27" width="7" height="7" fill="#00a4ef" />
    <rect x="19" y="27" width="7" height="7" fill="#ffb900" />
  </svg>
)

const MailGlyph = () => (
  <svg width="36" height="44" viewBox="0 0 36 44">
    <path d="M18 0L0 16v28h36V16z" fill="#0f6cbd" />
    <path d="M0 16l18 16 18-16z" fill="#eaf4fb" />
    <path d="M0 16v28h36z" fill="#29a8ea" />
    <path d="M36 16v28H14z" fill="#5ccbf5" />
  </svg>
)

const PeaGlyph = () => (
  <svg width="36" height="44" viewBox="0 0 36 44">
    <rect width="36" height="44" fill="#9ed400" />
    <path d="M0 0h36L0 44z" fill="#f4d400" />
    <path d="M4 40C6 20 20 6 32 4c0 16-12 34-28 36z" fill="#4d7d00" />
    <circle cx="24" cy="14" r="4" fill="#d6e000" />
    <circle cx="17" cy="23" r="4.500" fill="#d6e000" />
    <circle cx="10" cy="32" r="4" fill="#d6e000" />
  </svg>
)

const AvastGlyph = () => (
  <svg width="36" height="44" viewBox="0 0 36 44">
    <ellipse cx="18" cy="22" rx="18" ry="22" fill="#f57c00" />
    <path d="M10 24L26 4l-6 20 12-8-10 12 8 2-16 4 3-6z" fill="#fff" />
    <path d="M4 30c6 0 12 0 16 4" stroke="#fff" strokeWidth="2" fill="none" />
  </svg>
)

const PhotosGlyph = () => (
  <svg width="32" height="44" viewBox="0 0 32 44">
    <rect width="32" height="44" rx="2" fill="#27a8ea" />
    <path d="M0 44V30l12-14 8 10 4-4 8 10v12z" fill="#1b4f8f" />
    <path d="M12 16l8 10-4 18h16V32l-8-10-4 4z" fill="#5572d0" />
  </svg>
)

const WhatsGlyph = () => (
  <svg width="34" height="42" viewBox="0 0 34 42">
    <path d="M17 1a16 17 0 0 1 0 34c-3 0-5-1-7-2l-9 4 3-9A17 17 0 0 1 17 1z" fill="#2dd36f" />
    <path d="M11 10c2-1 3 3 2 4s2 5 5 6 2-2 4-1 3 2 2 4-6 2-11-3-4-9-2-10z" fill="#fff" />
  </svg>
)

const WindowsLogo = () => (
  <svg width="24" height="24" viewBox="0 0 24 24" fill="#fff">
    <path d="M0 3.500l10-1.400V11.500H0zM11 2l13-2v11.500H11zM0 12.500h10v9.600L0 20.500zM11 12.500h13V24l-13-2z" />
  </svg>
)

const TaskViewIcon = () => (
  <svg width="24" height="24" viewBox="0 0 24 24" fill="none" stroke="#fff" strokeWidth="1.300">
    <path d="M0 4V1h14v3M0 20v3h14v-3M0 8h14v8H0zM22 1v2M22 10v4M22 21v2" />
  </svg>
)

const PeopleIcon = () => (
  <svg width="24" height="24" viewBox="0 0 24 24" fill="none" stroke="#fff" strokeWidth="1.500">
    <circle cx="8" cy="11" r="3" /><circle cx="16" cy="6" r="3.500" />
    <path d="M2 22c0-5 3-7 6-7s5 2 5 7M14 11c4 0 7 3 7 9" />
  </svg>
)

const WifiIcon = () => (
  <svg width="22" height="24" viewBox="0 0 22 24" fill="none" stroke="#bbb" strokeWidth="1.200">
    <path d="M1 22C1 12 7 3 16 1M7 22c0-6 3-10 9-12M12 22c0-3 1-5 4-6" />
    <circle cx="17" cy="21" r="2" fill="#fff" stroke="none" />
  </svg>
)

const BatteryIcon = () => (
  <svg width="24" height="16" viewBox="0 0 24 16">
    <rect x=".7" y=".7" width="20" height="14.600" fill="#eee" stroke="#fff" strokeWidth="1.400" />
    <rect x="21.500" y="5" width="2" height="6" fill="#fff" />
  </svg>
)

const VolumeIcon = () => (
  <svg width="24" height="24" viewBox="0 0 24 24" fill="none" stroke="#fff" strokeWidth="1.200">
    <path d="M1 9h5l6-6v18l-6-6H1zM15 9c1 2 1 4 0 6M18 6c2 4 2 8 0 12" />
  </svg>
)

const NotifyIcon = () => (
  <svg width="24" height="32" viewBox="0 0 24 32" fill="#fff">
    <path d="M0 0h24v24H10l-5 6v-6H0z" />
    <path d="M5 6h14M5 11h14M5 16h10" stroke="#222" strokeWidth="1.500" />
  </svg>
)

/* data */

const tabs = [
  { label: 'Downloads', pad: 16, gap: 11, icon: <Download size={21} color="#1a73e8" strokeWidth={3} />, sep: true },
  { label: 'best animated', pad: 21, gap: 12, icon: <YouTubeGlyph />, sep: true, fade: true },
  { label: 'Workstation', pad: 18, gap: 11, icon: <DarkTile />, sep: true },
  { label: 'amstardam has', pad: 18, gap: 11, icon: <GmailGlyph />, fade: true },
  { label: 'Levitate – Figma', pad: 14, gap: 17, icon: <FigmaGlyph />, active: true, fade: true },
  { label: 'MSN Internatio', pad: 17, gap: 13, icon: <MsnTile />, sep: true, fade: true },
  { label: 'Easybank', pad: 18, gap: 13, icon: <GlobeGlyph />, sep: true },
]

const layers = [
  { name: 'twitter 1 (Traced)', deep: true, icon: <MaskGlyph mark={3.5} /> },
  { name: 'linkedin (1) 2 (Traced)', deep: true, icon: <VectorGlyph /> },
  { name: 'linkedin (1) 1 (Traced)', deep: true, icon: <MaskGlyph mark={5} /> },
  { name: 'instagram 1 (Traced)', deep: true, icon: <VectorGlyph /> },
  { name: 'facebook 2 (Traced)', deep: true, icon: <MaskGlyph mark={2.5} /> },
  { name: 'toggle up', icon: <GroupGlyph /> },
  { name: 'Arrow 1', deep: true, icon: <LineGlyph /> },
  { name: 'top', deep: true, icon: <RectGlyph /> },
  { name: 'Company', icon: <TextGlyph /> },
  { name: 'Legal', icon: <TextGlyph /> },
  { name: 'Top instruments', selected: true, icon: <TextGlyph color="#333" /> },
  { name: 'Products', icon: <TextGlyph /> },
  { name: 'money-management 1 (Traced)', icon: <VectorGlyph /> },
  { name: 'wallet 1 (Traced)', icon: <VectorGlyph /> },
]

const siteLinks = ['Products', 'Prices', 'Learn', 'Support', 'Futures', 'Resources']

const stats = [
  ['27', 'National Currencies'],
  ['88', 'Cryptocurrencies'],
  ['50', 'Us stocks'],
  ['4', 'Precious Metal'],
]

const features = [
  {
    title: 'Automated trading',
    badge: <ClockBadge />,
    lines: ['Schedule regular transactions', 'using AutoPilot, which allows you', 'to set up recurring buy or sell orders', 'and reduce the impact of price', 'volatility.'],
  },
  {
    title: 'Debit card',
    badge: <WalletBadge />,
    lines: ['The Uphold Card* allows you to', 'pay with crypto, gold, and more.', 'Earn 1% CashBack and 2% Crypto', 'Reward. Spend Bitcoin, earn', 'Bitcoin.'],
  },
  {
    title: 'Multi-Asset Platform',
    badge: <ChartBadge />,
    inset: true,
    lines: ['Cryptocurrencies,', 'precious metals,', 'U.S. equities*,', 'and national currencies.'],
  },
]

const footerColumns = [
  { head: 'Products', headGap: 12, gap: 4, links: ['Personal', 'Business', 'Developers', 'Affiliate'] },
  { head: 'Top instruments', headGap: 12, gap: 2, links: ['Bitcoin (BTC)', 'Ethereum (ETH)', 'Shiba (in\nMillions)', 'Tesla', 'Apple', 'Nio'] },
  { head: 'Legal', headGap: 12, gap: 2, links: ['Agreements', 'Privacy & Data\nPolicy', 'California Privacy', 'Cookie Policy'] },
  { head: 'Company', headGap: 13, gap: 2, links: ['About', "We're Hiring", 'Press', 'Blog', 'Security'] },
]

const downloads = ['Arrow 1 (1).svg', 'linkedin (1) 2 (Trac....svg', 'instagram 1 (Traced).svg', 'linkedin (1) 1 (Trac....svg']

const taskApps = [
  { icon: <EdgeGlyph size={36} /> },
  { icon: <ExplorerGlyph />, running: true },
  { icon: <VsCodeGlyph />, running: true },
  { icon: <ChromeGlyph />, active: true },
  { icon: <KrakenGlyph /> },
  { icon: <StoreGlyph /> },
  { icon: <MailGlyph /> },
  { icon: <PeaGlyph /> },
  { icon: <AvastGlyph /> },
  { icon: <PhotosGlyph />, running: true },
  { icon: <WhatsGlyph />, running: true, badge: '9' },
]

const Dots = () => Array.from({ length: 7 }, (_, i) => <Dot key={i} />)

const Tab = ({ tab }) => (
  <TabBox $active={tab.active} $pad={tab.pad}>
    <TabIcon $gap={tab.gap}>{tab.icon}</TabIcon>
    <TabLabel $fade={tab.fade}>{tab.label}</TabLabel>
    <X size={19} strokeWidth={2.4} color="#3c4043" />
    {tab.sep && <TabSep />}
  </TabBox>
)

const ChromeBar = () => (
  <>
    <TabStrip>
      {tabs.map(t => <Tab key={t.label} tab={t} />)}
      <PlusButton><Plus size={26} strokeWidth={2.6} /></PlusButton>
      <WindowControls>
        <WindowButton $w={70}><ChevronDown size={24} strokeWidth={1.2} /></WindowButton>
        <WindowButton $w={70}><Minus size={22} strokeWidth={1.5} /></WindowButton>
        <WindowButton $w={70}>
          <svg width="18" height="24" viewBox="0 0 18 24" fill="none" stroke="#3c4043" strokeWidth="1.300"><rect x="1" y="5" width="12" height="17" /><path d="M5 5V1h12v17h-4" /></svg>
        </WindowButton>
        <WindowButton $w={68}><X size={26} strokeWidth={1.1} /></WindowButton>
      </WindowControls>
    </TabStrip>
    <Toolbar>
      <NavButton $color="#b4b7bb"><ArrowLeft size={23} strokeWidth={1.8} /></NavButton>
      <NavButton $color="#b4b7bb"><ArrowRight size={23} strokeWidth={1.8} /></NavButton>
      <NavButton $color="#55595e"><RotateCw size={22} strokeWidth={2.2} /></NavButton>
      <Omnibox>
        <Lock size={15} fill="#5f6368" strokeWidth={2.4} />
        <UrlText>figma.com/file/VPRX81zTNZ7Iz9wrKolE75/Levitate...</UrlText>
        <OmniAction><ShareOut /></OmniAction>
        <OmniAction><Star size={23} strokeWidth={2} color="#3c4043" /></OmniAction>
      </Omnibox>
      {extensions.map((e, i) => <ExtCell key={i}>{e}</ExtCell>)}
      <ExtCell><CounterExtension /></ExtCell>
      <ExtCell><Puzzle size={23} fill="#5f6368" color="#5f6368" /></ExtCell>
      <ExtCell><SidePanelIcon /></ExtCell>
      <ExtCell><Avatar>B</Avatar></ExtCell>
      <ExtCell><DotsMenu /></ExtCell>
    </Toolbar>
    <ChromeRule />
  </>
)

const FigmaToolbar = () => (
  <FigmaBar>
    <FigmaMenu><FigmaOutline /><ChevronDown size={14} color="#ccc" /></FigmaMenu>
    <ToolButton $w={60} $active><CursorIcon /></ToolButton>
    <ToolButton $w={60}><Hand size={30} strokeWidth={1.2} color="#ddd" /></ToolButton>
    <ToolButton $w={60}><BubbleIcon /></ToolButton>
    <FileName>Levitate <ChevronDown size={14} /></FileName>
    <ViewOnly>View only</ViewOnly>
    <TryAnima>Try<br />Anima</TryAnima>
    <ShareButton>Share</ShareButton>
    <CodeButton>Get Code</CodeButton>
    <PlayButton><PlayIcon /></PlayButton>
    <Zoom>16% <ChevronDown size={14} /></Zoom>
  </FigmaBar>
)

const LayersPanel = () => (
  <Sidebar>
    <PageRow>Page 1 <ChevronDown size={15} color="#999" /></PageRow>
    <FrameRow><GridIcon />iPhone 13 Pro Max - 1</FrameRow>
    {layers.map(l => (
      <LayerRow key={l.name} $deep={l.deep} $selected={l.selected}>
        <LayerIcon $selected={l.selected}>{l.icon}</LayerIcon>
        {l.name}
      </LayerRow>
    ))}
  </Sidebar>
)

const DesktopPage = () => (
  <DesktopFrame $x={788} $y={202} $w={336}>
    <SiteNav>
      <Brand><LogoMark top={NAVY} middle={ORANGE} />Levitate</Brand>
      <LinkGrid>{siteLinks.map(l => <span key={l}>{l}</span>)}</LinkGrid>
      <Lang><Flag />En</Lang>
    </SiteNav>
    <Hero>
      <HeroTitle>The easiest way to earn interest<br />on your crypto!</HeroTitle>
      <HeroSub>Trade between cryptocurrencies, precious metals, U.S. equities*,<br />and national currencies in one easy step</HeroSub>
      <HeroActions>
        <SolidButton $bg={NAVY}>Get Started</SolidButton>
        <SolidButton $bg={ORANGE}>Sign in</SolidButton>
      </HeroActions>
      <StocksTitle>Stocks, Crypto and Beyond</StocksTitle>
      <StocksSub>Discover thousands of assets across<br />multiple categories</StocksSub>
    </Hero>
    <StatBand>
      {stats.map(([value, label]) => (
        <div key={label}>
          <StatValue>{value}</StatValue>
          <StatLabel>{label}</StatLabel>
        </div>
      ))}
    </StatBand>
    <Features>
      {features.map(f => (
        <Feature key={f.title}>
          <FeatureBadge>{f.badge}</FeatureBadge>
          <FeatureCard>
            <FeatureTitle>{f.title}</FeatureTitle>
            <FeatureText $inset={f.inset}>{f.lines.map(l => <div key={l}>{l}</div>)}</FeatureText>
          </FeatureCard>
        </Feature>
      ))}
    </Features>
    <Newsletter>
      <NewsTitle>Sign up for Levitate Newsletter</NewsTitle>
      <NewsSub>Get exclusive Levitate content and updates<br />delivered to your inbox.</NewsSub>
      <NewsLabel>Email address</NewsLabel>
      <NewsField><SolidButton $w={81} $bg={NAVY}>Sign in</SolidButton></NewsField>
    </Newsletter>
    <SiteFooter>
      <FooterLogo><LogoMark top="#fff" middle="#fff" /></FooterLogo>
      <FooterGrid>
        {footerColumns.map(c => (
          <div key={c.head}>
            <FooterHead $gap={c.headGap}>{c.head}</FooterHead>
            {c.links.map(l => <FooterLink key={l} $gap={c.gap}>{l}</FooterLink>)}
          </div>
        ))}
      </FooterGrid>
      <FooterRule />
      <ToggleUp>+</ToggleUp>
    </SiteFooter>
  </DesktopFrame>
)

const GetStartedCard = () => (
  <WhiteCard $x={538} $y={426} $w={215} $h={154}>
    <AuthTitle>Get Started</AuthTitle>
    <AuthBody $left={6}>
      <PairRow $cols="88px 88px" style={{ marginTop: -1 }}>
        <FieldLabel>First Name</FieldLabel>
        <FieldLabel $left={13}>Last Name</FieldLabel>
      </PairRow>
      <PairRow $cols="88px 88px" $top={2}>
        <InputBox $border="#fde3bd" $pad={4}>Input your name here</InputBox>
        <InputBox $border="#fde3bd" $pad={8}>Input your last name here</InputBox>
      </PairRow>
      <FieldLabel $top={8}>Email address</FieldLabel>
      <InputBox $top={2} $border="#fde3bd" $pad={4}>Input your email address here</InputBox>
      <PairRow $cols="88px 88px" $top={7}>
        <FieldLabel>Password</FieldLabel>
        <FieldLabel $left={13}>Confirm Password</FieldLabel>
      </PairRow>
      <PairRow $cols="88px 88px" $top={2}>
        <InputBox $border="#fde3bd" $pad={9}><Dots /></InputBox>
        <InputBox $border="#fde3bd" $pad={16}><Dots /></InputBox>
      </PairRow>
      <FieldNote>{'All password must contain atleast 8 characters\nand Upper case'}</FieldNote>
      <EnterButton $top={6} $bg={ORANGE}>Enter</EnterButton>
    </AuthBody>
  </WhiteCard>
)

const SignInCard = () => (
  <WhiteCard $x={527} $y={631} $w={216} $h={143}>
    <AuthTitle>Sign in</AuthTitle>
    <AuthBody $left={7}>
      <FieldLabel $top={6} $left={6}>Email address</FieldLabel>
      <InputBox $top={2} $border="#b9bad9" $pad={8}>Input your email address here</InputBox>
      <PairRow $cols="91px 92px" $top={12}>
        <FieldLabel $left={6}>Password</FieldLabel>
        <FieldLabel $left={4}>Confirm Password</FieldLabel>
      </PairRow>
      <PairRow $cols="91px 92px" $top={2}>
        <InputBox $border="#b9bad9" $pad={8}><Dots /></InputBox>
        <InputBox $border="#b9bad9" $pad={12}><Dots /></InputBox>
      </PairRow>
      <FieldNote>{'All password must contain atleast 8 characters\nand Upper case'}</FieldNote>
      <EnterButton $top={13} $bg={NAVY}>Enter</EnterButton>
    </AuthBody>
  </WhiteCard>
)

const CanvasArea = () => (
  <Canvas>
    <GradientButton $x={506} $y={350} $w={81} $bg="linear-gradient(90deg, #000020, #001090)">Get Started</GradientButton>
    <GradientButton $x={605} $y={350} $w={82} $bg="linear-gradient(180deg, #c47f12, #8a5a0c)">Sign in</GradientButton>

    <FrameLabel $x={703} $y={215}>Fram...</FrameLabel>
    <WhiteCard $x={703} $y={228} $w={61} $h={103}>
      <MenuList $top={10} $left={5} $size={5.2} $pitch={9.55}>
        {['Cryptocurrencies', 'Precious Metals', 'Stocks', 'Environmental Assets', 'Debit Cards', 'Limit Order', 'Staking', 'Automated Trading', 'Daily Newsletter'].map(t => <div key={t}>{t}</div>)}
      </MenuList>
    </WhiteCard>

    <FrameLabel $x={537} $y={413}>get started</FrameLabel>
    <GetStartedCard />
    <FrameLabel $x={527} $y={618}>sign in</FrameLabel>
    <SignInCard />

    <FrameLabel $x={788} $y={189}>Desktop - 1</FrameLabel>
    <CanvasItem $x={875} $y={184} $w={230}>
      <LinkGrid $ghost>{siteLinks.map(l => <span key={l}>{l}</span>)}</LinkGrid>
    </CanvasItem>
    <DesktopPage />

    <FrameLabel $x={1144} $y={189}>Lan...</FrameLabel>
    <WhiteCard $x={1144} $y={202} $w={58} $h={112} $shadow>
      <MenuList $top={11} $left={8} $size={5.2} $pitch={9.8}>
        {['Arabic', 'Deutsche', 'German', 'Mandarin', 'Igbo', 'Hausa', 'Yoruba', 'Africaners', 'Swahili'].map(t => <div key={t}>{t}</div>)}
      </MenuList>
    </WhiteCard>

    <FrameLabel $x={1164} $y={682}>newsletter</FrameLabel>
    <WhiteCard $x={1164} $y={695} $w={210} $h={75}>
      <HurrayTitle>Hurray!</HurrayTitle>
      <HurrayText>{'Thanks so much fo signing up for our Newsletter.\nWe promise to keep you updated about all our products  and offers'}</HurrayText>
    </WhiteCard>

    <FrameLabel $x={1548} $y={423}>get started</FrameLabel>
    <WhiteCard $x={1547} $y={436} $w={215} $h={153}>
      <ClippedStack $top={28} $left={6}>
        <ClippedInput $border="#fde3bd" $gap={18} />
        <ClippedInput $border="#fde3bd" $gap={17} />
        <ClippedInput $border="#fde3bd" $gap={16} />
        <ClippedInput $border={ORANGE} $fill={ORANGE} $gap={0} />
      </ClippedStack>
    </WhiteCard>
    <FrameLabel $x={1544} $y={626}>sign in</FrameLabel>
    <WhiteCard $x={1544} $y={639} $w={216} $h={143}>
      <ClippedStack $top={36} $left={8}>
        <ClippedInput $border="#b9bad9" $gap={22} />
        <ClippedInput $border="#b9bad9" $gap={24} />
        <ClippedInput $border={NAVY} $fill={NAVY} $gap={0} />
      </ClippedStack>
    </WhiteCard>

    <RedLine $x={361} $y={859} $w={427} />
    <RedBadge $x={365} $y={870} $w={55}>3803</RedBadge>
    <RedLine $x={407} $y={923} $w={381} $dashed />
    <RedTick />
    <RedBadge $x={416} $y={910} $w={33}>83</RedBadge>

    <ScrollThumb $vertical />
    <ScrollThumb />
  </Canvas>
)

const ExportPanel = () => (
  <Inspector>
    <InspectorTabs>
      <InspectorTab $w={100}>Comment</InspectorTab>
      <InspectorTab $w={83}>Inspect</InspectorTab>
      <InspectorTab $w={77} $active>Export</InspectorTab>
      <InspectorTab $w={50}>Code</InspectorTab>
    </InspectorTabs>
    <ExportRow>
      <TextGlyph color="#444" />
      <ExportKind>Text</ExportKind>
      Top instruments
      <ExportAdd><Plus size={21} strokeWidth={1.4} /></ExportAdd>
    </ExportRow>
    <HelpButton>?</HelpButton>
  </Inspector>
)

const DownloadShelf = () => (
  <Shelf>
    {downloads.map(d => (
      <ShelfItem key={d}>
        <EdgeGlyph />
        <ShelfName>{d}</ShelfName>
        <ChevronUp size={24} strokeWidth={2} color="#6b6f73" />
      </ShelfItem>
    ))}
    <ShowAll>Show all</ShowAll>
    <ShelfClose><X size={24} strokeWidth={2.4} /></ShelfClose>
  </Shelf>
)

const WindowsTaskbar = () => (
  <Taskbar>
    <StartButton><WindowsLogo /></StartButton>
    <SearchBox>
      <Cortana />
      Type here to search
      <SearchMic><Mic size={24} strokeWidth={1.6} /></SearchMic>
    </SearchBox>
    <TaskButton $w={76}><TaskViewIcon /></TaskButton>
    {taskApps.map((a, i) => (
      <TaskButton key={i} $active={a.active} $running={a.running}>
        {a.icon}
        {a.badge && <UnreadBadge>{a.badge}</UnreadBadge>}
      </TaskButton>
    ))}
    <TrayIcon $w={46} $left={23}><PeopleIcon /></TrayIcon>
    <TrayIcon $w={60}><ChevronUp size={26} strokeWidth={1.4} /></TrayIcon>
    <TrayIcon $w={20}><WifiIcon /></TrayIcon>
    <TrayIcon $w={46}><BatteryIcon /></TrayIcon>
    <TrayIcon $w={22}><VolumeIcon /></TrayIcon>
    <TrayIcon $w={49} $left={12}>ENG</TrayIcon>
    <Clock>3:20 PM<br />4/23/2022</Clock>
    <TaskButton $w={50}><NotifyIcon /><NotifyBadge>1</NotifyBadge></TaskButton>
  </Taskbar>
)

export default function App() {
  return (
    <Page>
      <GlobalStyle />
      <ChromeBar />
      <FigmaToolbar />
      <Main>
        <LayersPanel />
        <CanvasArea />
        <ExportPanel />
      </Main>
      <DownloadShelf />
      <WindowsTaskbar />
    </Page>
  )
}
